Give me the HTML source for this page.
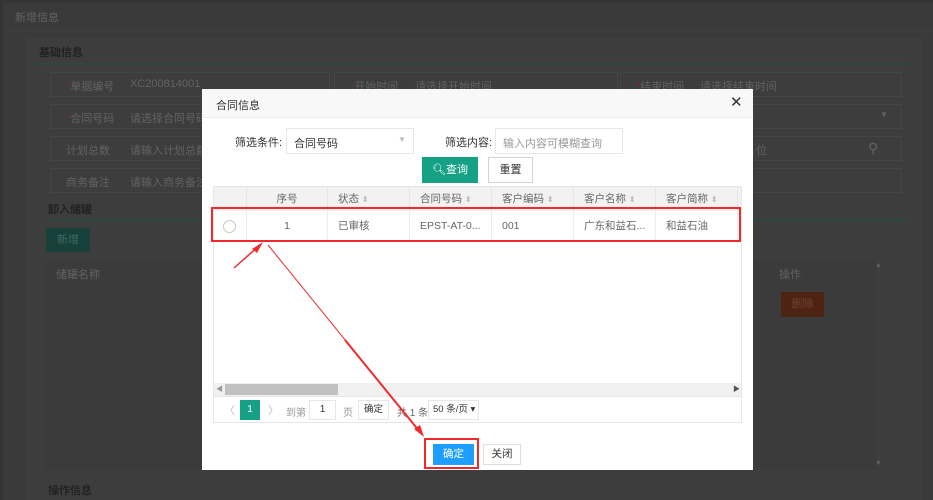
<!DOCTYPE html>
<html><head><meta charset="utf-8"><style>
*{box-sizing:border-box;margin:0;padding:0}
body{width:933px;height:500px;overflow:hidden;background:#343434;font-family:"Liberation Sans","Noto Sans CJK SC",sans-serif;font-size:11px;position:relative}
.a{position:absolute}
.fb{position:absolute;border:1px solid #454545;background:#3d3d3d;height:25px}
.lbl{position:absolute;color:#626262;font-size:11px}
.m{position:absolute;left:202px;top:89px;width:551px;height:381px;background:#fff}
.th{position:absolute;top:0;height:24px;line-height:24px;color:#666;font-size:10.5px;border-right:1px solid #e6e6e6}
.td{position:absolute;top:24px;height:30px;line-height:30px;color:#666;font-size:10.5px;border-right:1px solid #eee}
.s{color:#bbb;font-size:8px}
</style></head><body>
<div class="a" style="left:3px;top:3px;width:930px;height:497px;background:#3a3a3a"></div>
<div class="a" style="left:15px;top:9px;color:#626262;font-size:11px">新增信息</div>
<div class="a" style="left:3px;top:30px;width:930px;height:1px;background:#404040"></div>
<div class="a" style="left:25px;top:38px;width:898px;height:462px;background:#3d3d3d"></div>
<div class="a" style="left:39px;top:44px;color:#222;font-weight:bold;font-size:11px">基础信息</div>
<div class="a" style="left:36px;top:63px;width:872px;height:2px;background:#2c4744"></div>
<div class="fb" style="left:50px;top:72px;width:280px"></div>
<div class="fb" style="left:334px;top:72px;width:284px"></div>
<div class="fb" style="left:620px;top:72px;width:282px"></div>
<div class="fb" style="left:50px;top:104px;width:280px"></div>
<div class="fb" style="left:752px;top:104px;width:150px"></div>
<div class="fb" style="left:50px;top:136px;width:280px"></div>
<div class="fb" style="left:752px;top:136px;width:150px"></div>
<div class="fb" style="left:50px;top:168px;width:280px"></div>
<div class="fb" style="left:752px;top:168px;width:150px"></div>
<div class="lbl" style="left:66px;top:78px"><span style="color:#6a3030">*</span>单据编号</div>
<div class="lbl" style="left:130px;top:78px">XC200814001</div>
<div class="lbl" style="left:350px;top:78px"><span style="color:#6a3030">*</span>开始时间</div>
<div class="lbl" style="left:415px;top:78px">请选择开始时间</div>
<div class="lbl" style="left:636px;top:78px"><span style="color:#6a3030">*</span>结束时间</div>
<div class="lbl" style="left:700px;top:78px">请选择结束时间</div>
<div class="lbl" style="left:66px;top:110px"><span style="color:#6a3030">*</span>合同号码</div>
<div class="lbl" style="left:130px;top:110px">请选择合同号码</div>
<div class="lbl" style="left:880px;top:110px;font-size:8px">▼</div>
<div class="lbl" style="left:66px;top:142px">计划总数</div>
<div class="lbl" style="left:130px;top:142px">请输入计划总数</div>
<div class="lbl" style="left:756px;top:142px">位</div>
<div class="lbl" style="left:868px;top:140px;font-size:14px">⚲</div>
<div class="lbl" style="left:66px;top:174px">商务备注</div>
<div class="lbl" style="left:130px;top:174px">请输入商务备注</div>
<div class="a" style="left:48px;top:201px;color:#222;font-weight:bold;font-size:11px">卸入储罐</div>
<div class="a" style="left:46px;top:219px;width:862px;height:2px;background:#2c4744"></div>
<div class="a" style="left:46px;top:228px;width:44px;height:24px;background:#17403b;color:#3e6b64;line-height:24px;text-align:center">新增</div>
<div class="a" style="left:46px;top:260px;width:830px;height:210px;background:#3b3b3b"></div>
<div class="lbl" style="left:56px;top:266px">储罐名称</div>
<div class="lbl" style="left:779px;top:266px">操作</div>
<div class="a" style="left:781px;top:292px;width:43px;height:25px;background:#4d2414;color:#74402c;line-height:25px;text-align:center">删除</div>
<div class="lbl" style="left:875px;top:262px;font-size:7px">▲</div>
<div class="lbl" style="left:875px;top:460px;font-size:7px">▼</div>
<div class="a" style="left:48px;top:482px;color:#222;font-weight:bold;font-size:11px">操作信息</div>

<div class="m">
<div class="a" style="left:0;top:0;width:551px;height:29px;background:#f8f8f8;border-bottom:1px solid #eee"></div>
<div class="a" style="left:14px;top:8px;color:#333;font-size:11px">合同信息</div>
<div class="a" style="left:528px;top:4px;color:#333;font-size:15px">✕</div>
<div class="a" style="left:33px;top:45px;color:#333">筛选条件:</div>
<div class="a" style="left:84px;top:39px;width:128px;height:26px;border:1px solid #e6e6e6"></div>
<div class="a" style="left:92px;top:46px;color:#333">合同号码</div>
<div class="a" style="left:196px;top:46px;color:#bbb;font-size:8px">▼</div>
<div class="a" style="left:243px;top:45px;color:#333">筛选内容:</div>
<div class="a" style="left:293px;top:39px;width:128px;height:26px;border:1px solid #e6e6e6"></div>
<div class="a" style="left:301px;top:46px;color:#999">输入内容可模糊查询</div>
<div class="a" style="left:220px;top:68px;width:56px;height:26px;background:#16a085;color:#fff;line-height:26px;text-align:center">🔍︎查询</div>
<div class="a" style="left:286px;top:68px;width:45px;height:26px;border:1px solid #d2d2d2;color:#333;line-height:24px;text-align:center">重置</div>
<div class="a" style="left:11px;top:97px;width:529px;height:237px;border:1px solid #e6e6e6">
<div class="a" style="left:0;top:0;width:527px;height:24px;background:#f2f2f2"></div>
<div class="th" style="left:0;width:33px"></div>
<div class="th" style="left:33px;width:81px;text-align:center">序号</div>
<div class="th" style="left:114px;width:82px;padding-left:10px">状态 <span class="s">⬍</span></div>
<div class="th" style="left:196px;width:82px;padding-left:10px">合同号码 <span class="s">⬍</span></div>
<div class="th" style="left:278px;width:82px;padding-left:10px">客户编码 <span class="s">⬍</span></div>
<div class="th" style="left:360px;width:82px;padding-left:10px">客户名称 <span class="s">⬍</span></div>
<div class="th" style="left:442px;width:82px;padding-left:10px">客户简称 <span class="s">⬍</span></div>
<div class="td" style="left:0;width:33px"><div class="a" style="left:9px;top:9px;width:13px;height:13px;border:1px solid #c8c8c8;border-radius:50%"></div></div>
<div class="td" style="left:33px;width:81px;text-align:center">1</div>
<div class="td" style="left:114px;width:82px;padding-left:10px">已审核</div>
<div class="td" style="left:196px;width:82px;padding-left:10px">EPST-AT-0...</div>
<div class="td" style="left:278px;width:82px;padding-left:10px">001</div>
<div class="td" style="left:360px;width:82px;padding-left:10px">广东和益石...</div>
<div class="td" style="left:442px;width:82px;padding-left:10px">和益石油</div>
<div class="a" style="left:0;top:54px;width:527px;height:1px;background:#eee"></div>
<div class="a" style="left:0;top:196px;width:527px;height:13px;background:#f1f1f1"></div>
<div class="a" style="left:11px;top:197px;width:113px;height:11px;background:#c1c1c1"></div>
<div class="a" style="left:2px;top:197px;color:#999;font-size:7px">◀</div>
<div class="a" style="left:519px;top:197px;color:#555;font-size:7px">▶</div>
<div class="a" style="left:0;top:209px;width:527px;height:1px;background:#e6e6e6"></div>
<div class="a" style="left:10px;top:215px;color:#bbb;font-size:11px">〈</div>
<div class="a" style="left:26px;top:213px;width:20px;height:20px;background:#16a085;color:#fff;text-align:center;line-height:20px;font-size:10px">1</div>
<div class="a" style="left:54px;top:215px;color:#bbb;font-size:11px">〉</div>
<div class="a" style="left:72px;top:217px;color:#999;font-size:10px">到第</div>
<div class="a" style="left:95px;top:213px;width:27px;height:20px;border:1px solid #e6e6e6;text-align:center;line-height:18px;color:#333;font-size:10px">1</div>
<div class="a" style="left:129px;top:217px;color:#999;font-size:10px">页</div>
<div class="a" style="left:144px;top:213px;width:31px;height:20px;border:1px solid #e6e6e6;text-align:center;line-height:18px;color:#333;font-size:9.5px">确定</div>
<div class="a" style="left:183px;top:217px;color:#666;font-size:10px">共 1 条</div>
<div class="a" style="left:214px;top:213px;width:51px;height:20px;border:1px solid #e6e6e6;line-height:18px;color:#333;font-size:9.5px;padding-left:4px">50 条/页 ▾</div>
</div>
<div class="a" style="left:231px;top:355px;width:41px;height:21px;background:#1e9fff;color:#fff;text-align:center;line-height:21px;font-size:10.5px">确定</div>
<div class="a" style="left:281px;top:355px;width:38px;height:21px;border:1px solid #ddd;color:#333;text-align:center;line-height:19px;font-size:10.5px">关闭</div>
</div>
<svg class="a" style="left:0;top:0" width="933" height="500">
<rect x="212" y="208" width="528" height="33" fill="none" stroke="#f02a2a" stroke-width="2"/>
<rect x="425" y="439" width="53" height="29" fill="none" stroke="#f02a2a" stroke-width="2"/>
<line x1="234" y1="268" x2="260" y2="245" stroke="#f02a2a" stroke-width="1.5"/>
<polygon points="263,242 252,249 257,253" fill="#f02a2a"/>
<line x1="268" y1="245" x2="420" y2="432" stroke="#f02a2a" stroke-width="1"/>
<line x1="345" y1="340" x2="420" y2="432" stroke="#f02a2a" stroke-width="2"/>
<polygon points="424,437 414,429 420,425" fill="#f02a2a"/>
</svg>
</body></html>
